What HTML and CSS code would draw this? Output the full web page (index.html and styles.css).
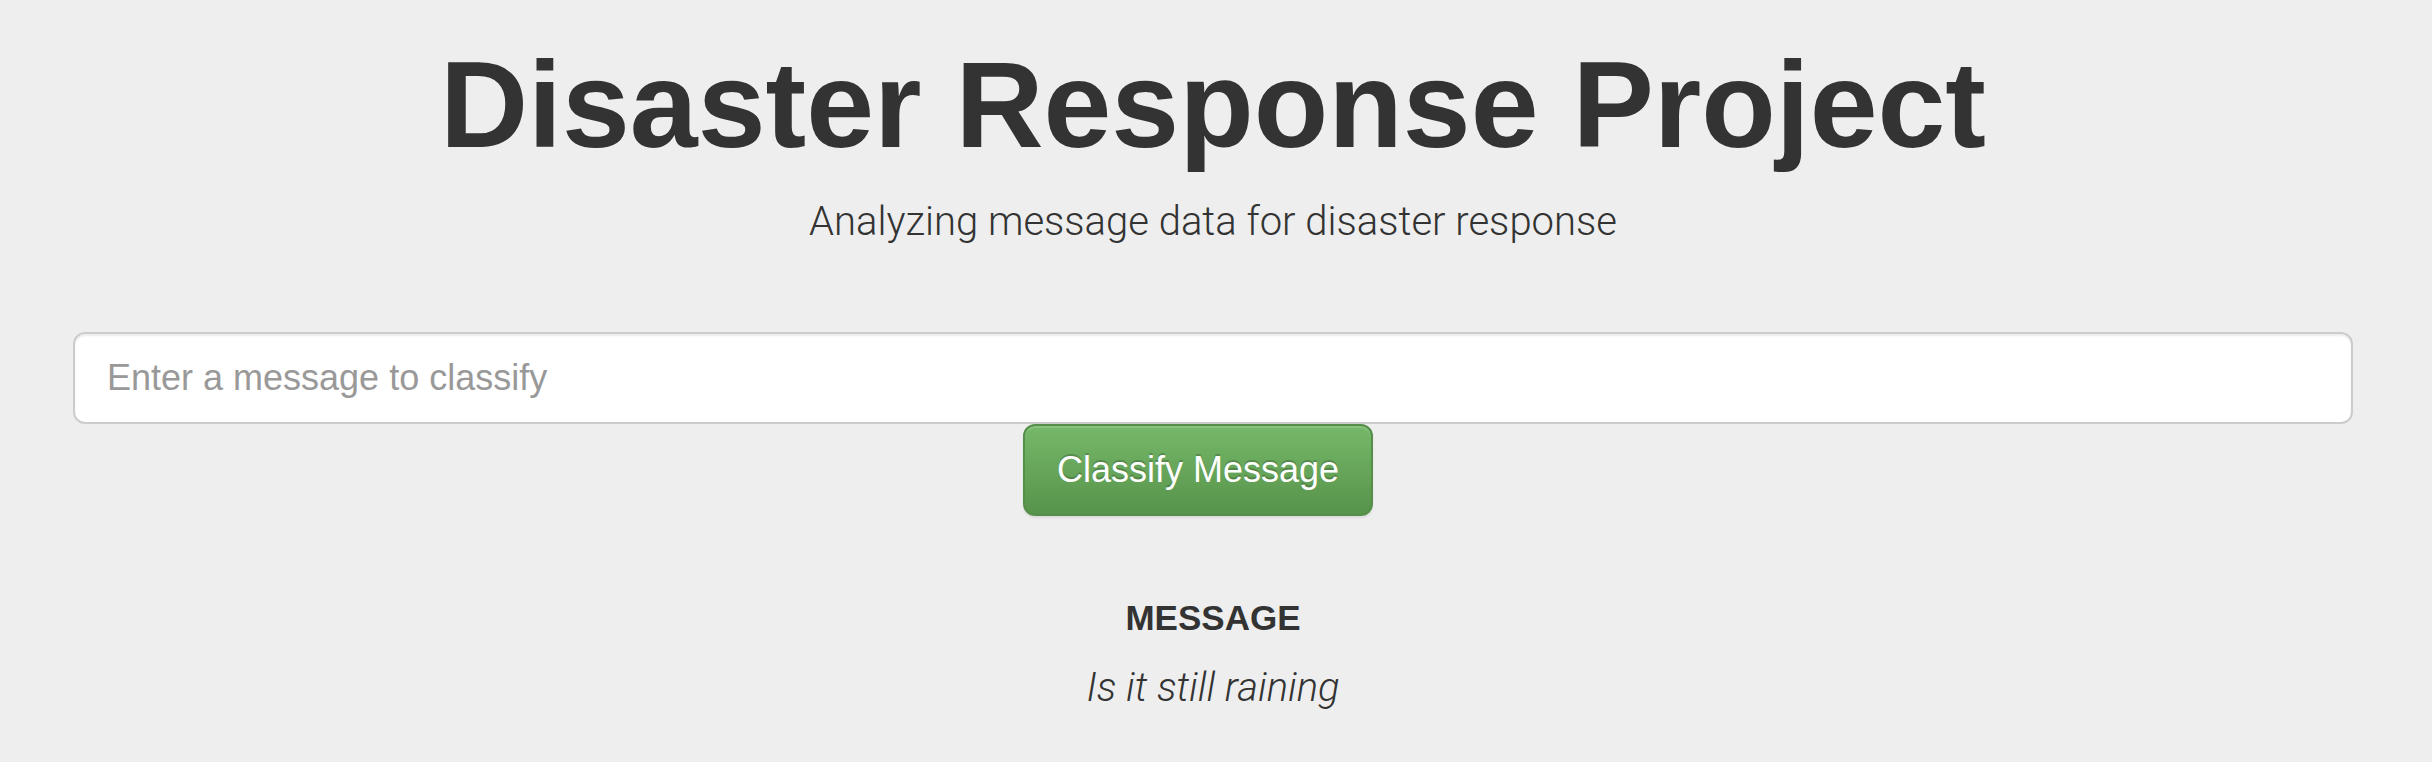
FILE: index.html
```html
<!DOCTYPE html>
<html lang="en">
<head>
<meta charset="utf-8">
<title>Disasters</title>
<link rel="stylesheet" href="styles.css">
</head>
<body>
<main class="jumbotron">
  <h1 class="title">Disaster Response Project</h1>
  <p class="lead">Analyzing message data for disaster response</p>
  <form class="classify-form">
    <input class="message-input" type="text" name="query" aria-label="Message" placeholder="Enter a message to classify">
    <button class="submit-button" type="submit">Classify Message</button>
  </form>
  <h2 class="label">MESSAGE</h2>
  <p class="message"><em>Is it still raining</em></p>
</main>
</body>
</html>
```

FILE: styles.css
```css
* {
  box-sizing: border-box;
}

body {
  margin: 0;
  background: #eee;
  color: #333;
  font-family: "Liberation Sans", Arial, sans-serif;
}

.jumbotron {
  min-height: 100vh;
  padding: 36px 79px 40px 73px;
  text-align: center;
}

.title {
  margin: 0;
  font-size: 122px;
  line-height: 138px;
  font-weight: 700;
}

.lead,
.message {
  margin: 0;
  font-family: Roboto, "Liberation Sans", sans-serif;
  font-weight: 300;
  font-size: 40px;
  line-height: 60px;
}

.lead {
  margin-top: 18px;
}

.classify-form {
  display: flex;
  flex-direction: column;
  align-items: center;
  margin-top: 80px;
}

.message-input {
  width: 100%;
  height: 92px;
  padding: 0 32px;
  border: 2px solid #ccc;
  border-radius: 12px;
  background: #fff;
  box-shadow: inset 0 2px 2px rgba(0, 0, 0, 0.075);
  color: #555;
  font: inherit;
  font-size: 36px;
}

.message-input::placeholder {
  color: #999;
  opacity: 1;
}

.submit-button {
  height: 92px;
  margin-right: 30px;
  padding: 0 32px;
  border: 2px solid #558f4a;
  border-radius: 12px;
  background: linear-gradient(#76b869, #57934b);
  box-shadow: inset 0 2px 0 rgba(255, 255, 255, 0.15), 0 2px 2px rgba(0, 0, 0, 0.075);
  color: #fff;
  font: inherit;
  font-size: 36px;
  text-shadow: 0 -2px 0 rgba(0, 0, 0, 0.2);
}

.label {
  margin: 80px 0 0;
  font-size: 35px;
  line-height: 44px;
}

.message {
  margin-top: 18px;
}
```
